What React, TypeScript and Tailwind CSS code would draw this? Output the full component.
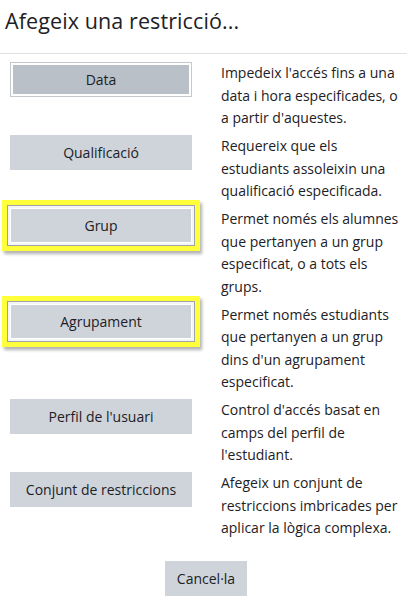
import React from "react";

type Row = {
  label: string;
  lines: string[];
  variant?: "active" | "marked";
};

const rows: Row[] = [
  {
    label: "Data",
    lines: ["Impedeix l'accés fins a una", "data i hora especificades, o", "a partir d'aquestes."],
    variant: "active",
  },
  {
    label: "Qualificació",
    lines: ["Requereix que els", "estudiants assoleixin una", "qualificació especificada."],
  },
  {
    label: "Grup",
    lines: ["Permet només els alumnes", "que pertanyen a un grup", "especificat, o a tots els", "grups."],
    variant: "marked",
  },
  {
    label: "Agrupament",
    lines: ["Permet només estudiants", "que pertanyen a un grup", "dins d'un agrupament", "especificat."],
    variant: "marked",
  },
  {
    label: "Perfil de l'usuari",
    lines: ["Control d'accés basat en", "camps del perfil de", "l'estudiant."],
  },
  {
    label: "Conjunt de restriccions",
    lines: ["Afegeix un conjunt de", "restriccions imbricades per", "aplicar la lògica complexa."],
  },
];

function RestrictionButton({ label, variant }: { label: string; variant?: Row["variant"] }) {
  if (variant === "active") {
    return (
      <button
        type="button"
        className="h-[35px] w-full border border-[#c4c9ce] bg-[#b9c0c8] text-[#1d2125] shadow-[inset_0_0_0_2px_#ffffff]"
      >
        {label}
      </button>
    );
  }

  return (
    <div className="relative">
      <button
        type="button"
        className={`h-[35px] w-full bg-[#ced4da] text-[#1d2125] ${
          variant === "marked" ? "shadow-[inset_0_0_0_1px_#ffffff]" : ""
        }`}
      >
        {label}
      </button>
      {/* yellow highlight drawn over the screenshot */}
      {variant === "marked" && (
        <div className="pointer-events-none absolute -inset-[8px] border-[5px] border-[#ffff3a] shadow-[2px_3px_3px_rgba(0,0,0,0.3),inset_0_0_0_1px_#9ea3a8,inset_0_0_0_3px_#f4f5f6]" />
      )}
    </div>
  );
}

export default function App() {
  return (
    <div className="w-[407px] h-[599px] overflow-hidden bg-white font-['Open_Sans',sans-serif] text-[#1d2125]">
      <div className="h-[54px] border-b border-[#dee2e6] pl-[5px] pt-[6px]">
        <h5 className="text-[21.5px] leading-[30px] tracking-[0.1px]">Afegeix una restricció...</h5>
      </div>

      <div className="flex flex-col gap-[5.5px] pl-[10px] pr-[10px] pt-[8px] text-[14px]">
        {rows.map((row) => (
          <div key={row.label} className="flex gap-[29px]">
            <div className="w-[182px] shrink-0">
              <RestrictionButton label={row.label} variant={row.variant} />
            </div>
            <p className="flex-1 leading-[22.5px] whitespace-nowrap">
              {row.lines.map((line, i) => (
                <React.Fragment key={i}>
                  {line}
                  {i < row.lines.length - 1 && <br />}
                </React.Fragment>
              ))}
            </p>
          </div>
        ))}
      </div>

      <div className="flex justify-center pl-[5px] pt-[21.5px] text-[14px]">
        <button type="button" className="h-[35px] w-[82px] bg-[#ced4da] text-[#1d2125]">
          Cancel·la
        </button>
      </div>
    </div>
  );
}
